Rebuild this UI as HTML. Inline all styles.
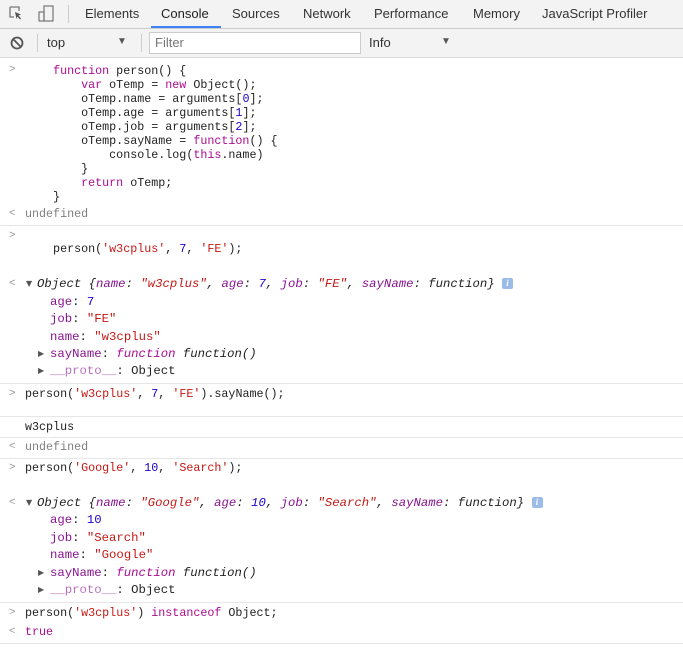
<!DOCTYPE html>
<html><head><meta charset="utf-8"><style>
body{margin:0;width:683px;height:650px;overflow:hidden;background:#fff;font-family:"Liberation Sans",sans-serif;position:relative}
.tabs{position:absolute;top:0;left:0;width:683px;height:28px;background:#f3f3f3;border-bottom:1px solid #ccc}
.tab{position:absolute;top:0;height:28px;line-height:27px;font-size:13px;color:#333}
.tb{position:absolute;top:29px;left:0;width:683px;height:28px;background:#f3f3f3;border-bottom:1px solid #ddd}
.l{position:absolute;left:0;height:14px;line-height:14px;font-family:"Liberation Mono",monospace;font-size:11.7px;white-space:pre;color:#222}
.o{font-size:12.3px}
.k{color:#aa0d91}.n{color:#1c00cf}.s{color:#c41a16}.p{color:#881391}.g{color:#808080}.i{font-style:italic}
.sep{position:absolute;left:0;width:683px;height:1px;background:#e6e6e6}
.gut{position:absolute;left:9px;font-size:11px;color:#999;font-family:"Liberation Sans",sans-serif}
.tri{position:absolute;font-size:8px;color:#555;font-family:"DejaVu Sans",sans-serif}
.info{display:inline-block;width:11px;height:11px;background:#9bbbe8;border-radius:2px;color:#fff;font-size:9px;text-align:center;line-height:11px;vertical-align:middle;font-style:italic;font-weight:bold;font-family:"Liberation Serif",serif}
</style></head><body>
<div class="tabs">
<svg style="position:absolute;left:9px;top:6px" width="14" height="15" viewBox="0 0 14 15"><path d="M1 1h9v4M1 1v10h4" fill="none" stroke="#777" stroke-width="1.3"/><path d="M6 6l6 2.5-2.5 1 2.5 3-1 1-2.5-3-1 2.5z" fill="#555"/></svg>
<svg style="position:absolute;left:37px;top:5px" width="18" height="17" viewBox="0 0 18 17"><rect x="7" y="1" width="9" height="15" fill="none" stroke="#777" stroke-width="1.2"/><rect x="2" y="7" width="5" height="9" fill="none" stroke="#777" stroke-width="1.2"/></svg>
<div style="position:absolute;left:68px;top:5px;width:1px;height:18px;background:#ccc"></div>
<div class="tab" style="left:85px">Elements</div>
<div class="tab" style="left:161px;color:#222">Console</div>
<div style="position:absolute;left:151px;top:26px;width:70px;height:2px;background:#3e82f7"></div>
<div class="tab" style="left:232px">Sources</div>
<div class="tab" style="left:303px">Network</div>
<div class="tab" style="left:374px">Performance</div>
<div class="tab" style="left:473px">Memory</div>
<div class="tab" style="left:542px">JavaScript Profiler</div>
</div>
<div class="tb">
<svg style="position:absolute;left:10px;top:7px" width="14" height="14" viewBox="0 0 14 14"><circle cx="7" cy="7" r="5.5" fill="none" stroke="#555" stroke-width="1.8"/><path d="M3 3l8 8" stroke="#555" stroke-width="1.8"/></svg>
<div style="position:absolute;left:37px;top:5px;width:1px;height:18px;background:#ccc"></div>
<div style="position:absolute;left:47px;top:0;line-height:28px;font-size:13px;color:#333">top</div>
<div style="position:absolute;left:117px;top:0;line-height:26px;font-size:10px;color:#555">▼</div>
<div style="position:absolute;left:141px;top:5px;width:1px;height:18px;background:#ccc"></div>
<div style="position:absolute;left:149px;top:3px;width:210px;height:20px;background:#fff;border:1px solid #ccc;font-size:13px;line-height:20px;color:#777;text-indent:5px">Filter</div>
<div style="position:absolute;left:369px;top:0;line-height:28px;font-size:13px;color:#333">Info</div>
<div style="position:absolute;left:441px;top:0;line-height:26px;font-size:10px;color:#555">▼</div>
</div>

<div class="gut" style="top:63px">&gt;</div>
<div class="l" style="top:64px;left:25px">    <span class="k">function</span> person() {
        <span class="k">var</span> oTemp = <span class="k">new</span> Object();
        oTemp.name = arguments[<span class="n">0</span>];
        oTemp.age = arguments[<span class="n">1</span>];
        oTemp.job = arguments[<span class="n">2</span>];
        oTemp.sayName = <span class="k">function</span>() {
            console.log(<span class="k">this</span>.name)
        }
        <span class="k">return</span> oTemp;
    }</div>
<div class="gut" style="top:207px">&lt;</div>
<div class="l g" style="top:207px;left:25px">undefined</div>
<div class="sep" style="top:225px"></div>

<div class="gut" style="top:229px">&gt;</div>
<div class="l" style="top:242px;left:25px">    person(<span class="s">'w3cplus'</span>, <span class="n">7</span>, <span class="s">'FE'</span>);</div>

<div class="gut" style="top:277px">&lt;</div>
<div class="tri" style="left:26px;top:279px">▼</div>
<div class="l o i" style="top:277px;left:37px">Object {<span class="p">name</span>: <span class="s">"w3cplus"</span>, <span class="p">age</span>: <span class="n">7</span>, <span class="p">job</span>: <span class="s">"FE"</span>, <span class="p">sayName</span>: function} <span class="info">i</span></div>
<div class="l o" style="top:295px;left:50px"><span class="p">age</span>: <span class="n">7</span></div>
<div class="l o" style="top:312px;left:50px"><span class="p">job</span>: <span class="s">"FE"</span></div>
<div class="l o" style="top:330px;left:50px"><span class="p">name</span>: <span class="s">"w3cplus"</span></div>
<div class="tri" style="left:38px;top:349px">▶</div>
<div class="l o" style="top:347px;left:50px"><span class="p">sayName</span>: <span class="k i">function</span> <span class="i">function()</span></div>
<div class="tri" style="left:38px;top:366px">▶</div>
<div class="l o" style="top:364px;left:50px"><span class="p" style="opacity:.6">__proto__</span>: Object</div>
<div class="sep" style="top:383px"></div>

<div class="gut" style="top:387px">&gt;</div>
<div class="l" style="top:387px;left:25px">person(<span class="s">'w3cplus'</span>, <span class="n">7</span>, <span class="s">'FE'</span>).sayName();</div>
<div class="sep" style="top:416px"></div>
<div class="l" style="top:420px;left:25px">w3cplus</div>
<div class="sep" style="top:437px"></div>
<div class="gut" style="top:440px">&lt;</div>
<div class="l g" style="top:440px;left:25px">undefined</div>
<div class="sep" style="top:458px"></div>

<div class="gut" style="top:461px">&gt;</div>
<div class="l" style="top:461px;left:25px">person(<span class="s">'Google'</span>, <span class="n">10</span>, <span class="s">'Search'</span>);</div>
<div class="gut" style="top:496px">&lt;</div>
<div class="tri" style="left:26px;top:498px">▼</div>
<div class="l o i" style="top:496px;left:37px">Object {<span class="p">name</span>: <span class="s">"Google"</span>, <span class="p">age</span>: <span class="n">10</span>, <span class="p">job</span>: <span class="s">"Search"</span>, <span class="p">sayName</span>: function} <span class="info">i</span></div>
<div class="l o" style="top:513px;left:50px"><span class="p">age</span>: <span class="n">10</span></div>
<div class="l o" style="top:531px;left:50px"><span class="p">job</span>: <span class="s">"Search"</span></div>
<div class="l o" style="top:548px;left:50px"><span class="p">name</span>: <span class="s">"Google"</span></div>
<div class="tri" style="left:38px;top:568px">▶</div>
<div class="l o" style="top:566px;left:50px"><span class="p">sayName</span>: <span class="k i">function</span> <span class="i">function()</span></div>
<div class="tri" style="left:38px;top:585px">▶</div>
<div class="l o" style="top:583px;left:50px"><span class="p" style="opacity:.6">__proto__</span>: Object</div>
<div class="sep" style="top:602px"></div>

<div class="gut" style="top:606px">&gt;</div>
<div class="l" style="top:606px;left:25px">person(<span class="s">'w3cplus'</span>) <span class="k">instanceof</span> Object;</div>
<div class="gut" style="top:625px">&lt;</div>
<div class="l k" style="top:625px;left:25px">true</div>
<div class="sep" style="top:643px"></div>
</body></html>
